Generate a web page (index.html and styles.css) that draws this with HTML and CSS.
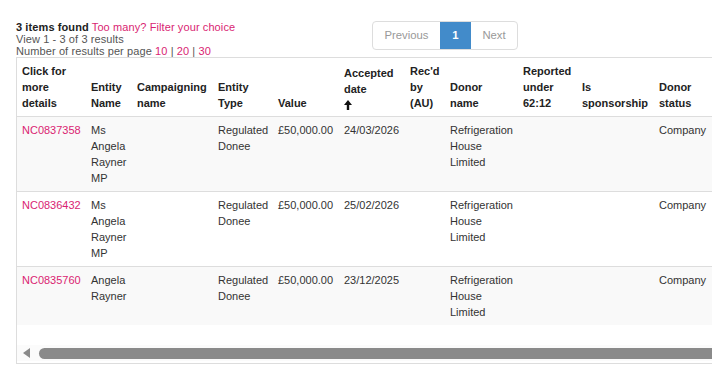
FILE: index.html
```html
<!DOCTYPE html>
<html lang="en">
<head>
<meta charset="utf-8">
<title>Results</title>
<link rel="stylesheet" href="styles.css">
</head>
<body>
<div class="page">
  <div class="topbar">
    <div class="info">
      <div><b class="found">3 items found</b> <a class="pink" href="#">Too many? Filter your choice</a></div>
      <div>View 1 - 3 of 3 results</div>
      <div>Number of results per page <a class="pink" href="#">10</a> | <a class="pink" href="#">20</a> | <a class="pink" href="#">30</a></div>
    </div>
    <div class="pager">
      <span class="pg prev">Previous</span><span class="pg cur">1</span><span class="pg next">Next</span>
    </div>
  </div>
  <div class="box">
    <div class="scroller">
      <table class="results">
        <thead>
          <tr>
            <th class="c1">Click for more details</th>
            <th class="c2">Entity Name</th>
            <th class="c3">Campaigning name</th>
            <th class="c4">Entity Type</th>
            <th class="c5">Value</th>
            <th class="c6">Accepted date <svg class="arrow" width="8" height="10" viewBox="0 0 8 10"><path d="M4 0 L8 5 L5.2 5 L5.2 10 L2.8 10 L2.8 5 L0 5 Z" fill="#111"/></svg></th>
            <th class="c7">Rec'd by (AU)</th>
            <th class="c8">Donor name</th>
            <th class="c9">Reported under 62:12</th>
            <th class="c10">Is sponsorship</th>
            <th class="c11">Donor status</th>
            <th class="c12"></th>
          </tr>
        </thead>
        <tbody>
          <tr class="odd">
            <td><a class="pink" href="#">NC0837358</a></td>
            <td>Ms Angela Rayner MP</td>
            <td></td>
            <td>Regulated Donee</td>
            <td>£50,000.00</td>
            <td>24/03/2026</td>
            <td></td>
            <td>Refrigeration House Limited</td>
            <td></td>
            <td></td>
            <td>Company</td>
            <td></td>
          </tr>
          <tr>
            <td><a class="pink" href="#">NC0836432</a></td>
            <td>Ms Angela Rayner MP</td>
            <td></td>
            <td>Regulated Donee</td>
            <td>£50,000.00</td>
            <td>25/02/2026</td>
            <td></td>
            <td>Refrigeration House Limited</td>
            <td></td>
            <td></td>
            <td>Company</td>
            <td></td>
          </tr>
          <tr class="odd">
            <td><a class="pink" href="#">NC0835760</a></td>
            <td>Angela Rayner</td>
            <td></td>
            <td>Regulated Donee</td>
            <td>£50,000.00</td>
            <td>23/12/2025</td>
            <td></td>
            <td>Refrigeration House Limited</td>
            <td></td>
            <td></td>
            <td>Company</td>
            <td></td>
          </tr>
        </tbody>
      </table>
    </div>
    <div class="fakebar">
      <span class="tri"></span>
      <span class="thumb"></span>
    </div>
  </div>
</div>
</body>
</html>
```

FILE: styles.css
```css
html, body {
  margin: 0;
  padding: 0;
  overflow: hidden;
  background: #fff;
}
body {
  font-family: "Liberation Sans", Arial, sans-serif;
  font-size: 11px;
  color: #333;
}
.page {
  padding: 21px 0 0 16px;
}
.topbar {
  display: flex;
  align-items: flex-start;
}
.info {
  width: 356px;
  line-height: 12px;
  color: #555;
  letter-spacing: 0.1px;
}
.found {
  color: #222;
  font-weight: bold;
}
.pink {
  color: #d91e72;
  text-decoration: none;
}
.pager {
  display: flex;
  border: 1px solid #ddd;
  border-radius: 4px;
  height: 27px;
  overflow: hidden;
}
.pg {
  display: block;
  line-height: 27px;
  color: #999;
  font-size: 11.3px;
  text-align: center;
}
.prev { width: 67px; }
.cur {
  width: 31px;
  background: #428bca;
  color: #fff;
  font-weight: bold;
}
.next { width: 46px; }
.box {
  width: 760px;
  border: 1px solid #ddd;
  border-right: none;
}
.scroller {
  overflow: hidden;
  height: 285px;
}
.results {
  border-collapse: collapse;
  table-layout: fixed;
  width: 800px;
  line-height: 16px;
}
.results th, .results td {
  box-sizing: border-box;
  padding: 5px 5px;
  text-align: left;
  vertical-align: top;
}
.results th {
  vertical-align: bottom;
  color: #222;
  font-weight: bold;
  border-bottom: 1px solid #ddd;
}
.results tbody tr {
  border-bottom: 1px solid #ddd;
}
.results tbody tr:last-child {
  border-bottom: none;
}
.results tr.odd {
  background: #f9f9f9;
}
.arrow {
  display: block;
  margin-top: 3px;
  margin-bottom: 1px;
}
.c1 { width: 69px; }
.c2 { width: 46px; }
.c3 { width: 81px; }
.c4 { width: 60px; }
.c5 { width: 66px; }
.c6 { width: 66px; }
.c7 { width: 40px; }
.c8 { width: 73px; }
.c9 { width: 59px; }
.c10 { width: 77px; }
.c11 { width: 60px; }
.c12 { width: 103px; }
.fakebar {
  height: 16px;
  background: #fbfbfb;
  display: flex;
  align-items: center;
  padding-left: 6px;
  gap: 9px;
  margin-top: 2px;
  margin-bottom: 2px;
}
.tri {
  width: 0;
  height: 0;
  border-top: 5px solid transparent;
  border-bottom: 5px solid transparent;
  border-right: 7px solid #8a8a8a;
}
.thumb {
  flex: 1;
  height: 11px;
  background: #8a8a8a;
  border-radius: 6px 0 0 6px;
}
```
